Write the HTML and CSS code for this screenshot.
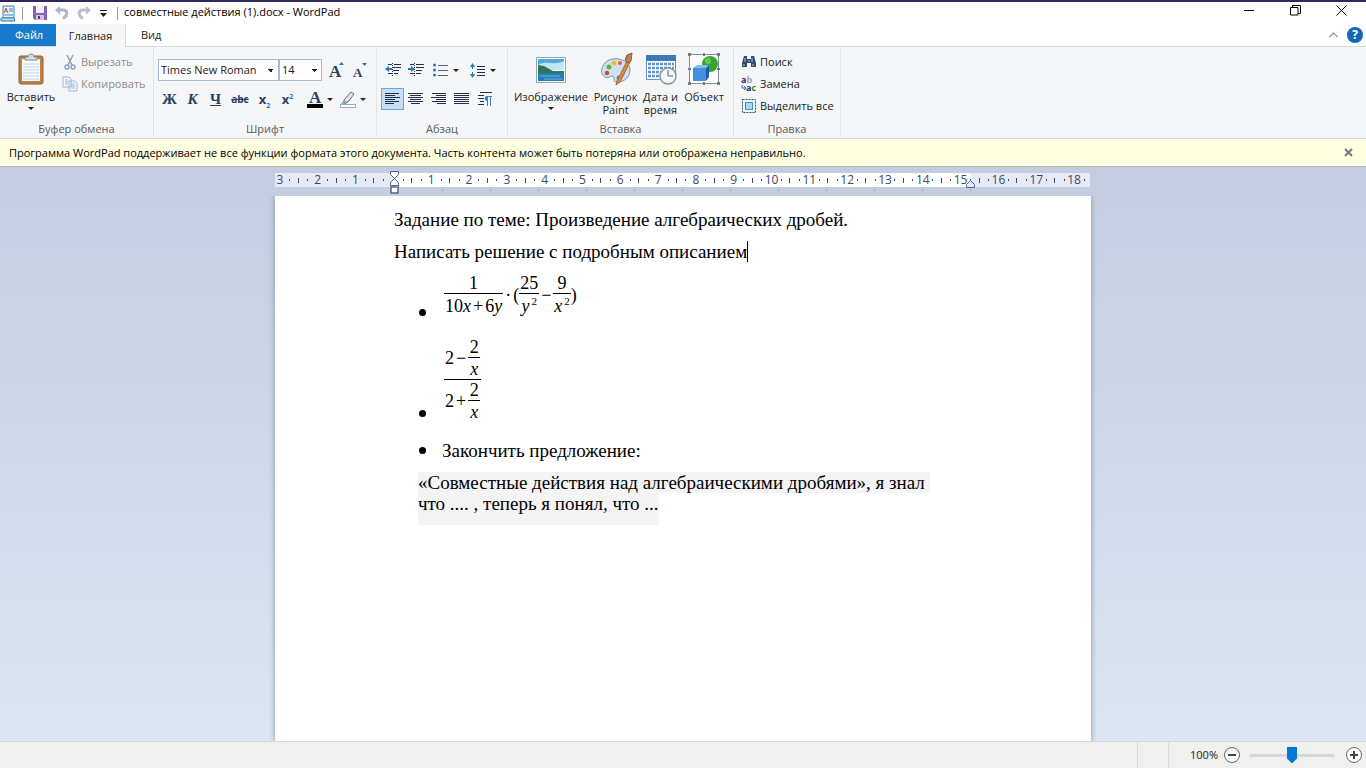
FILE: index.html
```html
<!DOCTYPE html>
<html lang="ru">
<head>
    <meta charset="UTF-8">
    <meta name="viewport" content="width=device-width, initial-scale=1.0">
    <title>совместные действия (1).docx - WordPad</title>
    <link rel="stylesheet" href="styles.css">
</head>
<body>
    <header class="titlebar">
        <div class="quick">
            <svg class="app-icon" width="16" height="17" viewBox="0 0 16 17"><path d="M3 1h11v12H3z" fill="#e8f4fc" stroke="#3a86b8"/><path d="M1 13h13l1 3H1z" fill="#b9dcf2" stroke="#3a7ca8"/><path d="M4 8l2-5 2 5M5 6h2" fill="none" stroke="#d0562b"/><path d="M9 4h4M9 6h4M4 10h9" stroke="#3a8ec8"/></svg>
            <span class="sep"></span>
            <button class="quick-btn" aria-label="Сохранить"><svg width="14" height="14" viewBox="0 0 14 14"><path d="M0 0h14v14H2l-2-2z" fill="#8560ad"/><path d="M3 0h8v7H3z" fill="#f2eff8"/><path d="M3 9h8v5H3z" fill="#cfc3e0"/><path d="M5 10h2v3H5z" fill="#553a7a"/></svg></button>
            <button class="quick-btn" aria-label="Отменить"><svg width="14" height="14" viewBox="0 0 14 14"><path d="M3 4h5c5 0 5 6 0 8.500" fill="none" stroke="#a9b8cf" stroke-width="3"/><path d="M0 4l5-4v9z" fill="#a9b8cf"/></svg></button>
            <button class="quick-btn" aria-label="Вернуть"><svg width="14" height="14" viewBox="0 0 14 14"><path d="M11 4H6c-5 0-5 6 0 8.500" fill="none" stroke="#b4c0d2" stroke-width="3"/><path d="M14 4L9 0v9z" fill="#b4c0d2"/></svg></button>
            <button class="quick-btn narrow" aria-label="Настройка панели"><svg width="7" height="7" viewBox="0 0 7 7"><path d="M0 0h7v1H0zM0 3h7L3.500 7z" fill="#222"/></svg></button>
            <span class="sep"></span>
        </div>
        <h1 class="title">совместные действия (1).docx - WordPad</h1>
        <div class="window-buttons">
            <button aria-label="Свернуть"><svg width="11" height="11" viewBox="0 0 11 11"><path d="M0 5.500h10" stroke="#000"/></svg></button>
            <button aria-label="Восстановить"><svg width="11" height="11" viewBox="0 0 11 11"><path d="M.5 2.500h7.500v7.500H.5zM2.500 2.500v-2h8v8H8" fill="none" stroke="#000"/></svg></button>
            <button aria-label="Закрыть"><svg width="11" height="11" viewBox="0 0 11 11"><path d="M.5.5l10 10M10.500.5l-10 10" stroke="#000"/></svg></button>
        </div>
    </header>

    <nav class="tabs">
        <button class="tab file">Файл</button>
        <button class="tab active">Главная</button>
        <button class="tab">Вид</button>
        <div class="tabs-right">
            <button class="plain" aria-label="Свернуть ленту"><svg width="9" height="6" viewBox="0 0 9 6"><path d="M.5 5l4-4 4 4" fill="none" stroke="#999" stroke-width="1.300"/></svg></button>
            <button class="help" aria-label="Справка">?</button>
        </div>
    </nav>

    <section class="ribbon">
        <div class="group clipboard">
            <div class="group-body">
                <button class="big">
                    <svg width="32" height="32" viewBox="0 0 32 32"><rect x="4" y="3" width="24" height="28" rx="2" fill="#b9824a" stroke="#8e6134"/><path d="M7 6h18v22H7z" fill="#fbfdff"/><path d="M8 11h16M8 14h16M8 17h16M8 20h16M8 23h16M8 26h16" stroke="#b9cee0"/><path d="M10 7V4h3c0-4 6-4 6 0h3v3z" fill="#d9dde2" stroke="#7d858e"/></svg>
                    <span>Вставить</span><i class="arrow"></i>
                </button>
                <div class="stack">
                    <button class="row-btn disabled" disabled><svg width="16" height="16" viewBox="0 0 16 16"><path d="M5 1l5 10M11 1L6 11" stroke="#8fa5c3" stroke-width="1.600"/><circle cx="5" cy="13" r="2" fill="none" stroke="#8fa5c3" stroke-width="1.500"/><circle cx="11" cy="13" r="2" fill="none" stroke="#8fa5c3" stroke-width="1.500"/></svg>Вырезать</button>
                    <button class="row-btn disabled" disabled><svg width="16" height="16" viewBox="0 0 16 16"><path d="M1 1h6l2 2v8H1zM7 5h6l2 2v8H7z" fill="#f4f8fd" stroke="#9db6d6"/><path d="M3 4h3M3 6h3M3 8h3M9 8h4M9 10h4M9 12h4" stroke="#9db6d6"/></svg>Копировать</button>
                </div>
            </div>
            <div class="group-label">Буфер обмена</div>
        </div>

        <div class="group font">
            <div class="tool-row">
                <select class="font-name" aria-label="Шрифт"><option>Times New Roman</option></select>
                <select class="font-size" aria-label="Размер"><option>14</option></select>
                <button class="tool first" aria-label="Увеличить"><svg width="16" height="16" viewBox="0 0 16 16"><text class="glyph" x="0" y="15" font-size="17">A</text><path d="M10 3h5l-2.500-3z" fill="#2676bc"/></svg></button>
                <button class="tool" aria-label="Уменьшить"><svg width="16" height="16" viewBox="0 0 16 16"><text class="glyph" x="1" y="15" font-size="13">A</text><path d="M10 1h5l-2.500 3z" fill="#2676bc"/></svg></button>
            </div>
            <div class="tool-row">
                <button class="tool letter bold">Ж</button>
                <button class="tool letter italic">К</button>
                <button class="tool letter under">Ч</button>
                <button class="tool letter strike">abc</button>
                <button class="tool letter script">x<sub>2</sub></button>
                <button class="tool letter script">x<sup>2</sup></button>
                <button class="tool color text-color" aria-label="Цвет текста"><svg width="16" height="17" viewBox="0 0 16 17"><text class="glyph" x="2" y="12" font-size="17">A</text><path d="M0 13h16v4H0z" fill="#000"/></svg><i class="arrow"></i></button>
                <button class="tool color" aria-label="Цвет выделения"><svg width="16" height="17" viewBox="0 0 16 17"><path d="M4 9l7-8 3 2-6 8-4 2z" fill="#dfe7ed" stroke="#5e7183"/><path d="M4 9l4 2-4 2-3 0z" fill="#8faabd"/><path d="M.5 13.500h15v3H.5z" fill="#fff" stroke="#9ba8bc"/></svg><i class="arrow"></i></button>
            </div>
            <div class="group-label">Шрифт</div>
        </div>

        <div class="group paragraph">
            <div class="tool-row">
                <button class="tool" aria-label="Уменьшить отступ"><svg width="16" height="14" viewBox="0 0 16 14"><path d="M3 1.500h4M9 1.500h7M8 4.500h8M8 7.500h6M3 10.500h4M9 10.500h4" stroke="#22304d"/><path d="M7.500 0v14" stroke="#22304d" stroke-dasharray="1 1"/><path d="M0 6l4-3v2h3v2H4v2z" fill="#2676bc"/></svg></button>
                <button class="tool" aria-label="Увеличить отступ"><svg width="16" height="14" viewBox="0 0 16 14"><path d="M2 1.500h4M8 1.500h8M8 4.500h8M8 7.500h6M2 10.500h4M8 10.500h5" stroke="#22304d"/><path d="M6.500 0v14" stroke="#22304d" stroke-dasharray="1 1"/><path d="M7 6L3 3v2H0v2h3v2z" fill="#2676bc"/></svg></button>
                <button class="tool wide" aria-label="Начать список"><svg width="15" height="14" viewBox="0 0 15 14"><path d="M5 2.500h10M5 7.500h10M5 12.500h10" stroke="#4d6587"/><circle cx="1.500" cy="2" r="1.500" fill="#2676bc"/><circle cx="1.500" cy="7" r="1.500" fill="#2676bc"/><circle cx="1.500" cy="12" r="1.500" fill="#2676bc"/></svg><i class="arrow"></i></button>
                <button class="tool wide" aria-label="Интервал"><svg width="15" height="15" viewBox="0 0 15 15"><path d="M7 3.500h8M7 6.500h8M7 9.500h8M7 12.500h8" stroke="#22304d"/><path d="M0 4l2.500-4L5 4H3v2H2V4zM0 11l2.500 4L5 11H3V9H2v2z" fill="#2676bc"/></svg><i class="arrow"></i></button>
            </div>
            <div class="tool-row">
                <button class="tool pressed" aria-label="По левому краю"><svg width="15" height="12" viewBox="0 0 15 12"><path d="M0 .5h14M0 2.500h10M0 4.500h15M0 6.500h10M0 8.500h14M0 10.500h9" stroke="#22304d"/></svg></button>
                <button class="tool" aria-label="По центру"><svg width="15" height="12" viewBox="0 0 15 12"><path d="M0 .5h15M2 2.500h11M0 4.500h15M2 6.500h11M0 8.500h15M3 10.500h9" stroke="#22304d"/></svg></button>
                <button class="tool" aria-label="По правому краю"><svg width="15" height="12" viewBox="0 0 15 12"><path d="M1 .5h14M5 2.500h10M0 4.500h15M5 6.500h10M1 8.500h14M6 10.500h9" stroke="#22304d"/></svg></button>
                <button class="tool" aria-label="По ширине"><svg width="15" height="12" viewBox="0 0 15 12"><path d="M0 .5h15M0 2.500h15M0 4.500h15M0 6.500h15M0 8.500h15M0 10.500h15" stroke="#22304d"/></svg></button>
                <button class="tool" aria-label="Абзац"><svg width="14" height="14" viewBox="0 0 14 14"><path d="M2 .5h12M0 3.500h6M0 6.500h6M2 9.500h4M0 12.500h6" stroke="#22304d"/><path d="M14 4H9c-3 0-3 5 0 5v5h1V5h2v9h1V5h1z" fill="#2e86cf"/></svg></button>
            </div>
            <div class="group-label">Абзац</div>
        </div>

        <div class="group insert">
            <div class="group-body">
                <button class="big picture">
                    <svg width="32" height="32" viewBox="0 0 32 32"><path d="M1.500 4.500h29v25h-29z" fill="#fff" stroke="#91a5ae"/><path d="M3 6h26v9H3z" fill="#4fa9dc"/><path d="M3 12c8-5 16 1 26-4v9H3z" fill="#bfe6f2"/><path d="M3 12l6 1 9 5h11v3H3z" fill="#347556"/><path d="M3 20h26v8H3z" fill="#237eb8"/><path d="M5 23h20M9 26h18" stroke="#69b8d9"/></svg>
                    <span>Изображение</span><i class="arrow"></i>
                </button>
                <button class="big paint">
                    <svg width="32" height="32" viewBox="0 0 32 32"><path d="M5 10C12 2 30 6 30 17c0 9-9 13-14 12-4-1 0-5-4-6-2 0-4 3-7 1-5-3-4-10 0-14z" fill="#cfe2f3" stroke="#7193b5"/><circle cx="9" cy="14" r="2.500" fill="#65ad43"/><circle cx="14" cy="10" r="2.500" fill="#f0b84a"/><circle cx="7" cy="20" r="2.300" fill="#d84935"/><circle cx="20" cy="10" r="2" fill="#e5643d"/><circle cx="19" cy="25" r="2.500" fill="#4386d5"/><path d="M27 8L17 28l-1 4 4-3L30 9z" fill="#d98d3c" stroke="#a9632a"/><path d="M25 7l2-5 5-2-1 8-3 2z" fill="#b58458" stroke="#8a5b36"/></svg>
                    <span>Рисунок<br>Paint</span>
                </button>
                <button class="big date">
                    <svg width="32" height="32" viewBox="0 0 32 32"><path d="M1.500 2.500h29v24h-29z" fill="#fff" stroke="#6e91bc"/><path d="M1 2h30v6H1z" fill="#3f78b7"/><path d="M3 11h26M3 15h26M3 19h26M3 23h18" stroke="#5d91c8" stroke-width="2.500" stroke-dasharray="3 1"/><circle cx="23" cy="23" r="8" fill="#f4f6f8" stroke="#8b96a3" stroke-width="1.500"/><path d="M23 17v6h5" fill="none" stroke="#53606e"/></svg>
                    <span>Дата и<br>время</span>
                </button>
                <button class="big object">
                    <svg width="32" height="32" viewBox="0 0 32 32"><path d="M1.500 1.500h29v29h-29z" fill="#fff" stroke="#858c93"/><circle cx="22" cy="11" r="8" fill="#37a62c"/><circle cx="20" cy="8" r="3" fill="#67c854"/><path d="M5 15l4-3h12l-3 4z" fill="#82bdf1"/><path d="M5 15h13v13H5z" fill="#438fdf"/><path d="M18 15l3-3v12l-3 4z" fill="#205fa8"/><path d="M0 0h3v3H0zM15 0h2v3h-2zM29 0h3v3h-3zM0 15h3v2H0zM29 15h3v2h-3zM0 29h3v3H0zM15 29h2v3h-2zM29 29h3v3h-3z" fill="#737b83"/></svg>
                    <span>Объект</span>
                </button>
            </div>
            <div class="group-label">Вставка</div>
        </div>

        <div class="group edit">
            <div class="stack">
                <button class="row-btn"><svg width="16" height="16" viewBox="0 0 16 16"><path d="M3 2h3v3h4V2h3l2 7v4h-5V9H6v4H1V9z" fill="#2c4d78"/><path d="M4 4v4M11 4v4M3 10v2M12 10v2M7 7h2" stroke="#a9c5e3"/></svg>Поиск</button>
                <button class="row-btn"><svg width="16" height="16" viewBox="0 0 16 16"><text class="mini" x="0" y="7" fill="#22304d">a<tspan fill="#9aa7b7">b</tspan></text><text class="mini" x="5" y="15" fill="#22304d">a<tspan fill="#258c3b">c</tspan></text><path d="M1 9v3h3M3 10l2 2-2 2" fill="none" stroke="#2676bc"/></svg>Замена</button>
                <button class="row-btn"><svg width="16" height="16" viewBox="0 0 16 16"><path d="M1.500 1.500h13v13h-13z" fill="none" stroke="#285178" stroke-dasharray="2 1"/><path d="M4.500 4.500h7v7h-7z" fill="#a7d8f6" stroke="#398bc9"/></svg>Выделить все</button>
            </div>
            <div class="group-label">Правка</div>
        </div>
    </section>

    <div class="notice">
        <p>Программа WordPad поддерживает не все функции формата этого документа. Часть контента может быть потеряна или отображена неправильно.</p>
        <button class="plain" aria-label="Закрыть сообщение"><svg width="9" height="9" viewBox="0 0 9 9"><path d="M1 1l7 7M8 1L1 8" stroke="#777" stroke-width="2"/></svg></button>
    </div>

    <main class="workspace">
        <div class="ruler">
            <div class="ruler-strip">
                <div class="ruler-scale">
                    <span>3</span><span>2</span><span>1</span><span></span><span>1</span><span>2</span><span>3</span><span>4</span><span>5</span><span>6</span><span>7</span><span>8</span><span>9</span><span>10</span><span>11</span><span>12</span><span>13</span><span>14</span><span>15</span><span>16</span><span>17</span><span>18</span>
                </div>
            </div>
            <svg class="marker indent" width="10" height="23" viewBox="0 0 10 23"><path d="M.5.5h8v3l-4 4-4-4zM.5 14.500v-3l4-4 4 4v3z" fill="#fff" stroke="#53658a"/><path d="M1 16h7v6H1z" fill="#fff" stroke="#53658a" stroke-width="1.500"/></svg>
            <svg class="marker right" width="10" height="8" viewBox="0 0 10 8"><path d="M.5 7.500v-3l4-4 4 4v3z" fill="#e6ebf5" stroke="#53658a"/></svg>
        </div>
        <article class="page">
            <p>Задание по теме: Произведение алгебраических дробей.</p>
            <p>Написать решение с подробным описанием<span class="caret"></span></p>
            <ul>
                <li>
                    <div class="formula">
                        <span class="frac"><span>1</span><span>10<i>x</i><span class="op">+</span>6<i>y</i></span></span>
                        <span class="op">·</span><span>(</span>
                        <span class="frac"><span>25</span><span><i>y</i><sup>2</sup></span></span>
                        <span class="op">−</span>
                        <span class="frac"><span>9</span><span><i>x</i><sup>2</sup></span></span><span>)</span>
                    </div>
                </li>
                <li class="tall">
                    <div class="formula">
                        <span class="frac nested">
                            <span class="formula">2<span class="op">−</span><span class="frac"><span>2</span><i>x</i></span></span>
                            <span class="formula">2<span class="op">+</span><span class="frac"><span>2</span><i>x</i></span></span>
                        </span>
                    </div>
                </li>
                <li class="text-item">Закончить предложение:</li>
            </ul>
            <p class="quote"><span class="shade">«Совместные действия над алгебраическими дробями», я знал&nbsp;</span><span class="shade last">что .... , теперь я понял, что ...</span></p>
        </article>
    </main>

    <footer class="statusbar">
        <span class="cell"></span>
        <div class="zoom">
            <label for="zoom">100%</label>
            <button class="round" aria-label="Уменьшить масштаб"><svg width="16" height="16" viewBox="0 0 16 16"><circle cx="8" cy="8" r="7.500" fill="#fff" stroke="#666"/><path d="M4 8h8" stroke="#444" stroke-width="2"/></svg></button>
            <input type="range" id="zoom" min="0" max="200" value="100">
            <button class="round" aria-label="Увеличить масштаб"><svg width="16" height="16" viewBox="0 0 16 16"><circle cx="8" cy="8" r="7.500" fill="#fff" stroke="#666"/><path d="M4 8h8M8 4v8" stroke="#444" stroke-width="2"/></svg></button>
        </div>
    </footer>
</body>
</html>
```
FILE: styles.css
```css
* {
    box-sizing: border-box;
}
body {
    margin: 0;
    height: 100vh;
    display: flex;
    flex-direction: column;
    overflow: hidden;
    background: #fff;
    color: #222;
    font: 11px/16px "Open Sans", "Noto Sans", sans-serif;
}
button {
    padding: 0;
    border: 0;
    background: none;
    color: inherit;
    font: inherit;
    white-space: nowrap;
}
svg {
    display: block;
    flex: none;
    overflow: visible;
}
p, h1, ul {
    margin: 0;
    padding: 0;
}

/* title bar */
.titlebar {
    display: flex;
    height: 24px;
    border-top: 2px solid #30265c;
    color: #000;
}
.quick {
    display: flex;
    align-items: center;
}
.sep {
    width: 1px;
    height: 13px;
    margin: 0 6px;
    background: #999;
}
.quick-btn {
    width: 22px;
    display: flex;
    justify-content: center;
}
.quick-btn.narrow {
    width: 16px;
}
.title {
    font-size: 11px;
    font-weight: 400;
    line-height: 20px;
}
.window-buttons {
    display: flex;
    margin-left: auto;
    padding-right: 2px;
}
.window-buttons button {
    width: 46px;
    display: flex;
    justify-content: center;
    padding-top: 3px;
}

/* tabs */
.tabs {
    display: flex;
    height: 23px;
    border-bottom: 1px solid #d5d8dc;
}
.tab {
    padding: 0 15px;
}
.tab.file {
    width: 56px;
    background: #1979ca;
    color: #fff;
}
.tab.active {
    width: 70px;
    height: 23px;
    padding: 0;
    background: #f5f6f7;
    border-right: 1px solid #d5d8dc;
}
.tabs-right {
    display: flex;
    align-items: center;
    gap: 9px;
    margin-left: auto;
    padding-right: 3px;
}
.help {
    width: 16px;
    height: 16px;
    border-radius: 8px;
    background: #1467b3;
    color: #fff;
    font-size: 12px;
    font-weight: 700;
}

/* ribbon */
.ribbon {
    display: flex;
    height: 92px;
    background: #f5f6f7;
    border-bottom: 1px solid #d5d8dc;
}
.group {
    display: flex;
    flex-direction: column;
    padding-top: 4px;
    border-right: 1px solid #e1e3e5;
    margin-bottom: 2px;
}
.group-label {
    margin-top: auto;
    line-height: 14px;
    text-align: center;
    color: #5a5a5a;
}
.group-body {
    display: flex;
}
.clipboard { width: 154px; }
.font { width: 223px; }
.paragraph { width: 131px; }
.insert { width: 226px; }
.edit { width: 107px; }
.arrow {
    width: 0;
    height: 0;
    border: 3px solid transparent;
    border-top: 3px solid #222;
    border-bottom: 0;
}
.big {
    display: flex;
    flex-direction: column;
    align-items: center;
    padding-top: 2px;
    line-height: 13px;
}
.big span {
    margin-top: 5px;
}
.big .arrow {
    margin-top: 4px;
}
.clipboard .big { width: 62px; }
.picture { width: 86px; }
.paint { width: 43px; }
.date { width: 47px; }
.object { width: 40px; }
.stack {
    display: flex;
    flex-direction: column;
}
.row-btn {
    display: flex;
    align-items: center;
    gap: 3px;
    height: 22px;
}
.disabled {
    color: #8c8c8c;
}
.edit .stack {
    padding-left: 7px;
}
.tool-row {
    display: flex;
    align-items: center;
    height: 22px;
    margin: 8px 0 0 4px;
}
.tool-row + .tool-row {
    margin-top: 7px;
}
.tool {
    width: 23px;
    height: 22px;
    display: flex;
    align-items: center;
    justify-content: center;
    flex: none;
}
.tool.first {
    margin-left: 3px;
}
.color {
    width: 33px;
    gap: 4px;
}
.wide {
    width: 37px;
    gap: 5px;
}
.text-color {
    margin-left: 4px;
}
.pressed {
    background: #c5ddf5;
    border: 1px solid #6ea5da;
}
.font-name, .font-size {
    height: 22px;
    padding: 0 2px;
    border: 1px solid #abb8d2;
    border-radius: 0;
    appearance: none;
    color: #222;
    font: inherit;
    background: #fff conic-gradient(from -45deg at 50% 100%, #222 90deg, transparent 0) right 4px center / 6px 3px no-repeat;
    background-image: conic-gradient(from -45deg at 50% 100%, #222 90deg, transparent 0);
}
.font-name { width: 121px; }
.font-size { width: 43px; }
.glyph {
    font-family: "Liberation Serif", serif;
    font-weight: 700;
    fill: #2b4163;
}
.mini {
    font: 700 9px "Open Sans", sans-serif;
}
.letter {
    color: #2b4163;
    font: 700 15px "Liberation Serif", serif;
}
.italic { font-style: italic; }
.under { text-decoration: underline; }
.strike {
    width: 26px;
    font: 700 10px "Open Sans", sans-serif;
    text-decoration: line-through;
}
.script {
    display: block;
    font: 700 13px/20px "Open Sans", sans-serif;
}
.script sub, .script sup {
    font-size: 7px;
    line-height: 0;
    color: #2676bc;
}

/* notice */
.notice {
    display: flex;
    justify-content: space-between;
    align-items: center;
    height: 28px;
    padding: 0 13px 0 9px;
    border-bottom: 1px solid #b4b8b4;
    background: #ffffe1;
    color: #000;
}

/* document area */
.workspace {
    flex: 1;
    min-height: 0;
    display: flex;
    flex-direction: column;
    align-items: center;
    background: linear-gradient(#c3cde0, #dce6f2);
}
.ruler {
    position: relative;
    width: 816px;
    height: 29px;
    flex: none;
    padding-top: 6px;
    background: repeating-linear-gradient(90deg, transparent 0 47px, #98a5bb 47px 48px) 120px 22px / 576px 2px no-repeat;
}
.ruler-strip {
    overflow: hidden;
    margin-right: 1px;
    background: linear-gradient(90deg, #e6ebf5 119px, #fff 119px 695px, #e6ebf5 695px);
}
/* one cell per centimetre, numbers in the middle */
.ruler-scale {
    display: grid;
    grid-template-columns: repeat(22, 1fr);
    width: 832px;
    height: 14px;
    margin-left: -14px;
    color: #3c4a68;
    font-size: 12px;
    line-height: 14px;
}
.ruler-scale span {
    text-align: center;
    background:
        linear-gradient(#3c4a68, #3c4a68) 23% 50% / 1px 2px no-repeat,
        linear-gradient(#3c4a68, #3c4a68) 77% 50% / 1px 2px no-repeat,
        linear-gradient(#3c4a68, #3c4a68) 100% 50% / 1px 5px no-repeat;
}
.marker {
    position: absolute;
    top: 4px;
}
.indent { left: 115px; }
.marker.right {
    left: 691px;
    top: 13px;
}
.page {
    width: 816px;
    flex: 1;
    padding: 13px 120px 0 119px;
    background: #fff;
    box-shadow: 0 0 6px #8793ae;
    clip-path: inset(0 -6px);
    color: #000;
    font: 19px/21px "Liberation Serif", "Times New Roman", serif;
}
.page p {
    margin-bottom: 11px;
}
.caret {
    display: inline-block;
    height: 21px;
    border-left: 1px solid #000;
    vertical-align: bottom;
}
.page ul {
    list-style: none;
    padding-left: 24px;
}
.page li {
    display: flex;
    align-items: flex-end;
    margin-bottom: 11px;
}
.page li::before {
    content: "";
    width: 7px;
    height: 7px;
    margin: 0 16px 0 1px;
    border-radius: 4px;
    background: #000;
}
.page .text-item {
    align-items: center;
}
.formula {
    display: flex;
    align-items: center;
    font-size: 18px;
    line-height: 20px;
}
li > .formula {
    margin-left: 2px;
}
.frac {
    display: flex;
    flex-direction: column;
    align-items: center;
}
.frac > :first-child {
    align-self: stretch;
    text-align: center;
    border-bottom: 1px solid #000;
}
.frac > * {
    padding: 0 1px;
}
.frac > :last-child {
    padding-top: 2px;
}
.nested > :last-child {
    padding-top: 0;
}
.nested .frac > :last-child {
    padding: 1px 2px 0;
}
.frac sup {
    font-size: 11px;
    line-height: 0;
    margin-left: 2px;
}
.op {
    padding: 0 2px;
}
.page .tall {
    padding-top: 10px;
    margin-bottom: 18px;
}
.page .tall::before {
    margin-bottom: 5px;
}
.quote {
    padding-left: 24px;
}
.shade {
    float: left;
    background: #f4f4f4;
}
.shade.last {
    padding-bottom: 11px;
}

/* status bar */
.statusbar {
    display: flex;
    justify-content: flex-end;
    height: 27px;
    border-top: 1px solid #d7d7d7;
    background: #f0f0f0;
}
.cell {
    width: 32px;
    border: solid #d9d9d9;
    border-width: 0 1px;
}
.zoom {
    display: flex;
    align-items: center;
    padding: 0 4px 0 21px;
}
.round {
    margin-left: 6px;
}
.zoom input {
    width: 84px;
    height: 18px;
    margin: 0 6px 0 10px;
    appearance: none;
    background: linear-gradient(#d6d6d6, #d6d6d6) center / 100% 3px no-repeat;
}
.zoom input::-webkit-slider-thumb {
    appearance: none;
    width: 10px;
    height: 17px;
    background: #0078d7;
    clip-path: polygon(0 0, 100% 0, 100% 70%, 50% 100%, 0 70%);
}
```
